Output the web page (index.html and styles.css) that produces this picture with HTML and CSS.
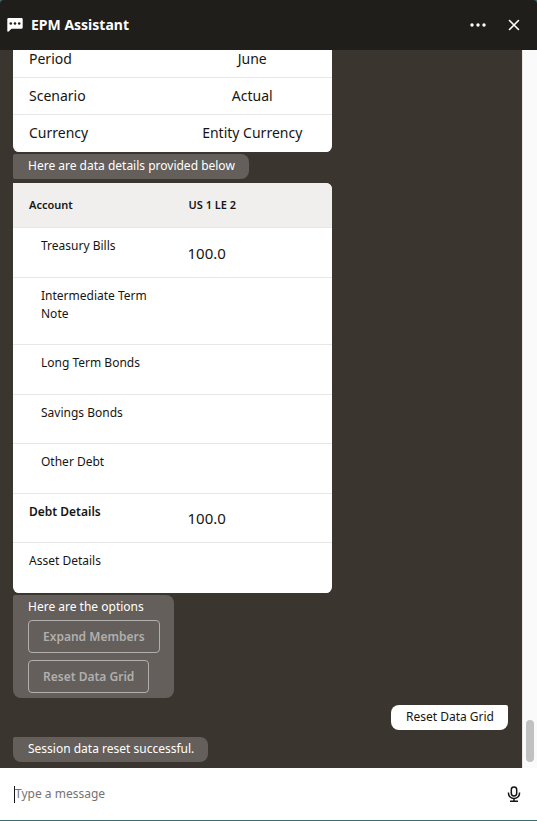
FILE: index.html
```html
<!DOCTYPE html>
<html lang="en">
<head>
    <meta charset="UTF-8">
    <meta name="viewport" content="width=device-width, initial-scale=1.0">
    <title>EPM Assistant</title>
    <link rel="stylesheet" href="styles.css">
</head>
<body>
    <div class="assistant">
        <header class="header">
            <svg class="logo" width="16" height="14" viewBox="0 0 16 14" aria-hidden="true">
                <path fill="#fff" d="M1.500 0h13A1.200 1.200 0 0 1 15.700 1.200v8.300a1.200 1.200 0 0 1-1.200 1.200H4.500L1.300 13.800Q.3 14 .3 13V1.200A1.200 1.200 0 0 1 1.500 0z"/>
                <circle cx="3.800" cy="5.500" r="1.300" fill="#201e1b"/>
                <circle cx="8" cy="5.500" r="1.300" fill="#201e1b"/>
                <circle cx="12.200" cy="5.500" r="1.300" fill="#201e1b"/>
            </svg>
            <h1 class="title">EPM Assistant</h1>
            <button type="button" class="icon-button" aria-label="More">
                <svg width="16" height="16" viewBox="0 0 16 16" fill="#fff">
                    <circle cx="2" cy="8" r="1.700"/>
                    <circle cx="8" cy="8" r="1.700"/>
                    <circle cx="14" cy="8" r="1.700"/>
                </svg>
            </button>
            <button type="button" class="icon-button" aria-label="Close">
                <svg width="16" height="16" viewBox="0 0 16 16" fill="none" stroke="#fff" stroke-width="1.600" stroke-linecap="round">
                    <path d="M3.500 3.500l9 9M12.500 3.500l-9 9"/>
                </svg>
            </button>
        </header>

        <main class="chat">
            <div class="messages">
                <table class="card pov">
                    <tr><th scope="row">Period</th><td>June</td></tr>
                    <tr><th scope="row">Scenario</th><td>Actual</td></tr>
                    <tr><th scope="row">Currency</th><td>Entity Currency</td></tr>
                </table>

                <p class="bubble">Here are data details provided below</p>

                <table class="card data">
                    <thead>
                        <tr><th scope="col">Account</th><th scope="col">US 1 LE 2</th></tr>
                    </thead>
                    <tbody>
                        <tr class="child"><th scope="row">Treasury Bills</th><td>100.0</td></tr>
                        <tr class="child"><th scope="row">Intermediate Term Note</th><td></td></tr>
                        <tr class="child"><th scope="row">Long Term Bonds</th><td></td></tr>
                        <tr class="child"><th scope="row">Savings Bonds</th><td></td></tr>
                        <tr class="child"><th scope="row">Other Debt</th><td></td></tr>
                        <tr class="total"><th scope="row">Debt Details</th><td>100.0</td></tr>
                        <tr><th scope="row">Asset Details</th><td></td></tr>
                    </tbody>
                </table>

                <div class="bubble options">
                    <p>Here are the options</p>
                    <button type="button" disabled>Expand Members</button>
                    <button type="button" disabled>Reset Data Grid</button>
                </div>

                <p class="bubble user">Reset Data Grid</p>

                <p class="bubble last">Session data reset successful.</p>
            </div>
            <div class="scrollbar"><div class="thumb"></div></div>
        </main>

        <form class="footer">
            <input class="message" type="text" placeholder="Type a message" aria-label="Type a message">
            <button type="button" class="icon-button" aria-label="Speak">
                <svg width="16" height="16" viewBox="0 0 16 16" fill="none" stroke="#161513" stroke-width="1.500">
                    <rect x="5.300" y="1" width="5.400" height="9" rx="2.700"/>
                    <path d="M2.500 6.500v1a5.500 5 0 0 0 11 0v-1M8 12.500v2.500M4 15.200h8"/>
                </svg>
            </button>
        </form>
    </div>
</body>
</html>
```
FILE: styles.css
```css
* {
    box-sizing: border-box;
}

body {
    margin: 0;
    padding-bottom: 1px;
    height: 100vh;
    background-color: #3c6b6e;
    font-family: "Noto Sans", sans-serif;
    font-size: 12px;
    line-height: 18px;
    color: #161513;
}

p {
    margin: 0;
}

button {
    font: inherit;
}

.assistant {
    display: flex;
    flex-direction: column;
    height: 100%;
    border-radius: 4px 4px 0 0;
    overflow: hidden;
}

/* header */
.header {
    display: flex;
    align-items: center;
    gap: 8px;
    flex: none;
    height: 50px;
    padding: 0 9px 0 7px;
    background-color: #201e1b;
    color: #fff;
}

.title {
    flex: 1;
    margin: 0;
    font-size: 14px;
    font-weight: 700;
}

.icon-button {
    display: flex;
    align-items: center;
    justify-content: center;
    width: 28px;
    height: 28px;
    padding: 0;
    border: none;
    background: none;
    cursor: pointer;
}

/* conversation */
.chat {
    display: flex;
    flex: 1;
    min-height: 0;
    background-color: #3a362f;
}

.messages {
    display: flex;
    flex: 1;
    flex-direction: column;
    align-items: flex-start;
    justify-content: flex-end;
    gap: 2px;
    padding: 0 14px 6px 13px;
    overflow: hidden;
}

.messages > * {
    flex: none;
}

.scrollbar {
    display: flex;
    align-items: flex-end;
    justify-content: center;
    width: 15px;
    padding-bottom: 6px;
    background-color: #fafafa;
    border-left: 1px solid #e8e8e8;
}

.thumb {
    width: 8px;
    height: 42px;
    border-radius: 4px;
    background-color: #c1c1c1;
}

.bubble {
    padding: 3px 14px 4px 15px;
    border-radius: 2px 8px 8px 2px;
    background-color: #645f5b;
    color: #fff;
}

.bubble.user {
    align-self: flex-end;
    margin: 5px 0;
    border-radius: 8px 2px 8px 8px;
    background-color: #fff;
    color: #161513;
}

.bubble.last {
    border-radius: 2px 8px 8px 8px;
}

/* tables */
.card {
    width: calc(100% - 176px);
    border-spacing: 0;
    table-layout: fixed;
    border-radius: 6px;
    background-color: #fff;
    overflow: hidden;
}

.card th,
.card td {
    border-bottom: 1px solid #e8e7e6;
    font-weight: 400;
    text-align: left;
}

.card tbody tr:last-child th,
.card tbody tr:last-child td {
    border-bottom-color: #fff;
}

.pov th,
.pov td {
    height: 37px;
    padding: 0 0 0 16px;
    font-size: 14px;
}

.pov td {
    padding: 0;
    text-align: center;
}

.data {
    margin: 2px 0 0;
    border-top-left-radius: 0;
}

.data th {
    padding: 9px 16px 21px;
    vertical-align: top;
}

.data td {
    padding: 0 16px 0 15px;
    font-size: 15px;
}

.data tbody tr:nth-child(odd) {
    height: 50px;
}

.data thead th {
    height: 45px;
    padding: 0 15px 0 16px;
    background-color: #f1efed;
    font-size: 11px;
    font-weight: 600;
    vertical-align: middle;
}

.data .child th {
    padding-left: 28px;
}

.data .total th {
    font-weight: 600;
}

/* option buttons */
.options {
    display: flex;
    flex-direction: column;
    align-items: flex-start;
    gap: 7px;
    padding-bottom: 5px;
    border-radius: 2px 8px 8px 8px;
}

.options p {
    margin-bottom: -3px;
}

.options button {
    height: 33px;
    padding: 0 14px;
    border: 1px solid #b1afad;
    border-radius: 4px;
    background: none;
    color: #b1afad;
    font-weight: 600;
}

/* message box */
.footer {
    display: flex;
    align-items: center;
    flex: none;
    height: 52px;
    padding: 0 9px 0 14px;
    background-color: #fff;
}

.message {
    flex: 1;
    min-width: 0;
    height: 17px;
    padding: 0;
    border: none;
    border-left: 1px solid #161513;
    outline: none;
    background: none;
    font: inherit;
}

.message::placeholder {
    color: #757371;
}
```
